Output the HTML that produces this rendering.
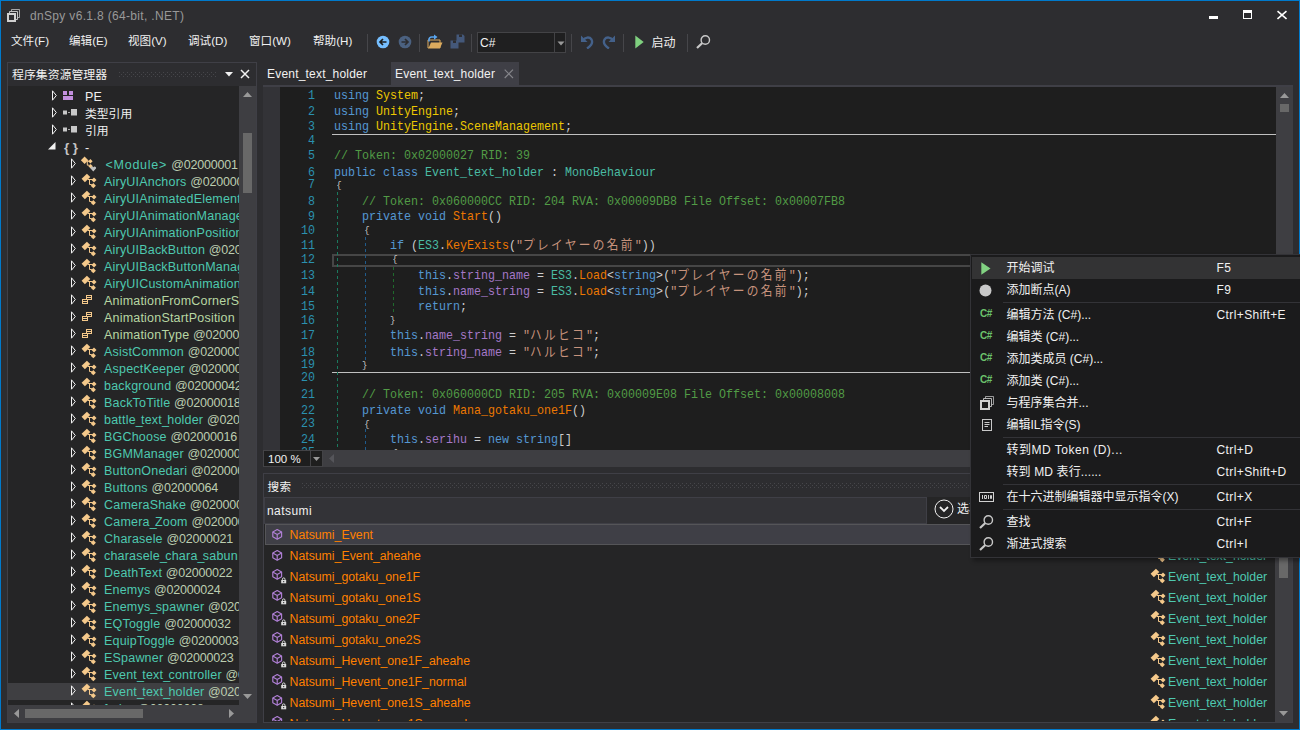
<!DOCTYPE html><html><head><meta charset="utf-8"><title>dnSpy</title><style>
*{box-sizing:border-box;margin:0;padding:0}
html,body{width:1300px;height:730px;overflow:hidden;background:#2d2d30}
body{position:relative;font-family:"Liberation Sans","Noto Sans CJK SC",sans-serif;font-size:12px;letter-spacing:0.2px;color:#f1f1f1}
.abs{position:absolute}
.t{position:absolute;white-space:pre;line-height:16px;height:16px}
#win{position:absolute;left:0;top:0;width:1300px;height:730px;border:1px solid #007acc;background:#2d2d30}
.menu{color:#f1f1f1}
.tree{position:absolute;left:8px;top:86px;width:231px;height:619px;background:#252526;overflow:hidden}
.row{position:absolute;left:0;width:231px;height:17px}
.row .tx{position:absolute;top:1px;line-height:17px;white-space:pre;font-size:12.5px}
.cls{color:#4ec9b0}.tok{color:#bccdb0;letter-spacing:-0.2px}.enm{color:#b8d7a3}
.code{position:absolute;left:334px;white-space:pre;letter-spacing:0;font-family:"Liberation Mono","Noto Sans CJK JP",monospace;font-size:13px;line-height:16px;height:16px;transform:scaleX(0.8974);transform-origin:0 50%;color:#dcdcdc;opacity:0.92}
.ln{position:absolute;left:243px;width:72px;text-align:right;white-space:pre;letter-spacing:0;font-family:"Liberation Mono","Noto Sans CJK JP",monospace;font-size:13px;line-height:16px;height:16px;transform:scaleX(0.8974);transform-origin:100% 50%;color:#2b91af}
.k{color:#5aa2e0}.ns{color:#ffd700}.ty{color:#4ec9b0}.c{color:#57a64a}.m{color:#ff8000}.f{color:#b180d7}.s{color:#d69d85}.n{color:#b5cea8}.p{color:#dcdcdc}
.cj{letter-spacing:2.6px}
.sr{position:absolute;left:265px;width:1011px;height:21px}
.sr .tx{position:absolute;left:24.5px;top:1px;line-height:20px;color:#ff8000;white-space:pre;font-size:12.3px;letter-spacing:0}
.sr .rt{position:absolute;left:903px;top:1px;line-height:20px;color:#4ec9b0;white-space:pre;font-size:12.3px;letter-spacing:0}
.mi{position:absolute;left:1px;width:340px;height:22px}
.mi .tx{position:absolute;left:34.5px;top:-0.5px;line-height:22px;white-space:pre;color:#f1f1f1;font-size:12px;letter-spacing:0}
.mi .sc{position:absolute;left:244.5px;top:-0.5px;line-height:22px;white-space:pre;color:#f1f1f1;letter-spacing:0.4px}
.sep{position:absolute;left:32px;width:310px;height:1px;background:#333337}
</style></head><body><div id="win">
<div class="abs" style="left:-1px;top:-1px;width:1300px;height:730px">
<!--TITLE-->
<div class="t" style="left:30px;top:8px;color:#999;letter-spacing:0.33px">dnSpy v6.1.8 (64-bit, .NET)</div>
<svg class="abs" style="left:7px;top:9px" width="13" height="13" viewBox="0 0 13 13" ><g fill="none" stroke="#d0d0d0"><path d="M4.5 2V0.5H12.5V8.5H11" stroke-width="1" opacity="0.75"/><path d="M2.5 4V2.5H10.5V10.5H9" stroke-width="1" opacity="0.9"/><rect x="1" y="5" width="7" height="7" stroke-width="2"/></g></svg>
<div class="abs" style="left:1209px;top:16px;width:9px;height:3px;background:#fff"></div>
<div class="abs" style="left:1243px;top:10px;width:9px;height:9px;border:1px solid #fff;border-top-width:3px"></div>
<svg class="abs" style="left:1277px;top:10px" width="10" height="10" viewBox="0 0 10 10" ><path d="M0.5 1.2L9.5 9M9.5 1.2L0.5 9" stroke="#fff" stroke-width="1.6" fill="none"/></svg>
<!--/TITLE-->
<!--MENU-->
<div class="t menu" style="left:11px;top:33px;letter-spacing:0;font-size:11.6px">文件(F)</div>
<div class="t menu" style="left:69px;top:33px;letter-spacing:0;font-size:11.6px">编辑(E)</div>
<div class="t menu" style="left:128px;top:33px;letter-spacing:0;font-size:11.6px">视图(V)</div>
<div class="t menu" style="left:188px;top:33px;letter-spacing:0;font-size:11.6px">调试(D)</div>
<div class="t menu" style="left:249px;top:33px;letter-spacing:0;font-size:11.6px">窗口(W)</div>
<div class="t menu" style="left:313px;top:33px;letter-spacing:0;font-size:11.6px">帮助(H)</div>
<!--/MENU-->
<!--TOOLBAR-->
<div class="abs" style="left:367px;top:34px;width:1px;height:18px;background:#46464a"></div>
<div class="abs" style="left:419px;top:34px;width:1px;height:18px;background:#46464a"></div>
<div class="abs" style="left:471px;top:34px;width:1px;height:18px;background:#46464a"></div>
<div class="abs" style="left:571px;top:34px;width:1px;height:18px;background:#46464a"></div>
<div class="abs" style="left:623px;top:34px;width:1px;height:18px;background:#46464a"></div>
<div class="abs" style="left:687px;top:34px;width:1px;height:18px;background:#46464a"></div>
<svg class="abs" style="left:376px;top:35px" width="14" height="14" viewBox="0 0 14 14" ><circle cx="7" cy="7" r="6.3" fill="#75beff"/><path d="M10.5 7H4.5M7 4L4 7L7 10" fill="none" stroke="#1e1e1e" stroke-width="1.7"/></svg>
<svg class="abs" style="left:398px;top:35px" width="14" height="14" viewBox="0 0 14 14" ><circle cx="7" cy="7" r="6.3" fill="#4b6180"/><path d="M3.5 7H9.5M7 4L10 7L7 10" fill="none" stroke="#2d2d30" stroke-width="1.7"/></svg>
<svg class="abs" style="left:427px;top:34px" width="16" height="16" viewBox="0 0 16 16" ><path d="M1 6H13V14H1Z" fill="none" stroke="#dcab5e" stroke-width="1"/><path d="M1.5 14L4 8.5H15.5L13 14Z" fill="#dcab5e"/><path d="M2 7.5V5.5A2.5 2.5 0 0 1 4.5 3H8.5" fill="none" stroke="#5aa6f0" stroke-width="1.6"/><path d="M7 0.5L10.5 3L7 5.8Z" fill="#5aa6f0"/></svg>
<svg class="abs" style="left:450px;top:34px" width="15" height="15" viewBox="0 0 15 15" ><path d="M6.5 0.5H13L14.5 2V8.5H6.5Z" fill="#44587a"/><rect x="9" y="0.5" width="3" height="2.5" fill="#2d2d30"/><path d="M0.5 6.5H7L8.5 8V14.5H0.5Z" fill="#44587a"/><rect x="3" y="6.5" width="3" height="2.5" fill="#2d2d30"/></svg>
<div class="abs" style="left:477px;top:32px;width:89px;height:21px;background:#1f1f20;border:1px solid #434346"></div>
<div class="abs" style="left:554px;top:33px;width:1px;height:19px;background:#434346"></div>
<svg class="abs" style="left:557px;top:41px" width="8" height="5" viewBox="0 0 8 5" ><path d="M0.5 0.5H7.5L4 4.5Z" fill="#999"/></svg>
<div class="t" style="left:480px;top:35px">C#</div>
<svg class="abs" style="left:580px;top:35px" width="14" height="14" viewBox="0 0 14 14" ><path d="M1 0.5V7H7.5Z" fill="#44618a"/><path d="M3 5.5C5 2 9.5 1.5 11.5 4.5C13 7.5 11 11 7 13.5" fill="none" stroke="#44618a" stroke-width="2.3"/></svg>
<svg class="abs" style="left:602px;top:35px" width="14" height="14" viewBox="0 0 14 14" ><path d="M13 0.5V7H6.5Z" fill="#44618a"/><path d="M11 5.5C9 2 4.5 1.5 2.5 4.5C1 7.5 3 11 7 13.5" fill="none" stroke="#44618a" stroke-width="2.3"/></svg>
<svg class="abs" style="left:635px;top:35px" width="9" height="14" viewBox="0 0 9 14" ><path d="M0.3 0.5L8.7 7L0.3 13.5Z" fill="#7fd07f"/></svg>
<div class="t" style="left:651.5px;top:35px;letter-spacing:0">启动</div>
<svg class="abs" style="left:696px;top:35px" width="15" height="14" viewBox="0 0 15 14" ><circle cx="9.3" cy="5" r="4.2" fill="none" stroke="#c8c8c8" stroke-width="1.4"/><path d="M6.3 8L1 13" stroke="#c8c8c8" stroke-width="2.2" fill="none"/></svg>
<!--/TOOLBAR-->
<!--LEFT-->
<div class="abs" style="left:7px;top:62px;width:250px;height:661px;border:1px solid #3f3f46;background:#2d2d30"></div>
<div class="t" style="left:12px;top:66.5px;letter-spacing:0;font-size:11.9px">程序集资源管理器</div>
<div class="tree">
<div class="row" style="top:2px"><div class="abs" style="left:1px;top:0;width:230px;height:17px">
<svg class="abs" style="left:42px;top:1.5px" width="7" height="11" viewBox="0 0 7 11" ><path d="M1.5 0.8L5.3 5.5L1.5 10.2Z" fill="none" stroke="#f1f1f1" stroke-width="1"/></svg>
<svg class="abs" style="left:54px;top:3px" width="10" height="9" viewBox="0 0 10 9" ><rect x="0" y="0" width="4" height="4" fill="#c28fde"/><rect x="6" y="0" width="4" height="4" fill="#c28fde"/><rect x="0" y="5" width="10" height="4" fill="#c28fde"/></svg>
<div class="tx" style="left:76px">PE</div>
</div></div>
<div class="row" style="top:19px"><div class="abs" style="left:1px;top:0;width:230px;height:17px">
<svg class="abs" style="left:42px;top:1.5px" width="7" height="11" viewBox="0 0 7 11" ><path d="M1.5 0.8L5.3 5.5L1.5 10.2Z" fill="none" stroke="#f1f1f1" stroke-width="1"/></svg>
<svg class="abs" style="left:54px;top:4px" width="14" height="7" viewBox="0 0 14 7" ><rect x="0" y="1.5" width="4" height="4" fill="#c8c8c8"/><rect x="5" y="3" width="2" height="1" fill="#a8a8a8"/><rect x="8" y="0" width="6" height="6.5" fill="#c8c8c8"/></svg>
<div class="tx" style="left:76px;font-size:11.8px;letter-spacing:0">类型引用</div>
</div></div>
<div class="row" style="top:36px"><div class="abs" style="left:1px;top:0;width:230px;height:17px">
<svg class="abs" style="left:42px;top:1.5px" width="7" height="11" viewBox="0 0 7 11" ><path d="M1.5 0.8L5.3 5.5L1.5 10.2Z" fill="none" stroke="#f1f1f1" stroke-width="1"/></svg>
<svg class="abs" style="left:54px;top:4px" width="14" height="7" viewBox="0 0 14 7" ><rect x="0" y="1.5" width="4" height="4" fill="#c8c8c8"/><rect x="5" y="3" width="2" height="1" fill="#a8a8a8"/><rect x="8" y="0" width="6" height="6.5" fill="#c8c8c8"/></svg>
<div class="tx" style="left:76px;font-size:11.8px;letter-spacing:0">引用</div>
</div></div>
<div class="row" style="top:53px"><div class="abs" style="left:1px;top:0;width:230px;height:17px">
<svg class="abs" style="left:39px;top:3px" width="8" height="8" viewBox="0 0 8 8" ><path d="M7.5 0V7.5H0Z" fill="#f1f1f1"/></svg>
<div class="tx" style="left:55px;font-size:13.5px;font-weight:bold;color:#c4c4c4;letter-spacing:3.5px;top:0px">{}</div>
<div class="tx" style="left:76px">-</div>
</div></div>
<div class="row" style="top:70px"><div class="abs" style="left:1px;top:0;width:230px;height:17px">
<svg class="abs" style="left:61px;top:1.5px" width="7" height="11" viewBox="0 0 7 11" ><path d="M1.5 0.8L5.3 5.5L1.5 10.2Z" fill="none" stroke="#f1f1f1" stroke-width="1"/></svg>
<svg class="abs" style="left:71px;top:0px" width="17" height="17" viewBox="0 0 17 17" ><path d="M4.6 0.5L8.3 4.2L4.6 7.9L0.9 4.2Z" fill="#f5c98b"/><path d="M10.4 3L12.6 5.2L10.4 7.4L8.2 5.2Z" fill="#f5c98b"/><path d="M10.6 8L12.8 10.2L10.6 12.4L8.4 10.2Z" fill="#f5c98b"/><path d="M7 5.2H9M7.3 5.2V9.2H9.5" fill="none" stroke="#f5c98b" stroke-width="1"/><path d="M13.3 15.6L10.6 12.6A1.5 1.5 0 0 1 13.3 11.3A1.5 1.5 0 0 1 16 12.6Z" fill="#c0c0c0"/></svg>
<div class="tx" style="left:95px;margin-left:1.5px;letter-spacing:0.75px"><span class="cls">&lt;Module&gt;</span> <span class="tok">@02000001</span></div>
</div></div>
<div class="row" style="top:87px"><div class="abs" style="left:1px;top:0;width:230px;height:17px">
<svg class="abs" style="left:61px;top:1.5px" width="7" height="11" viewBox="0 0 7 11" ><path d="M1.5 0.8L5.3 5.5L1.5 10.2Z" fill="none" stroke="#f1f1f1" stroke-width="1"/></svg>
<svg class="abs" style="left:72px;top:0px" width="16" height="16" viewBox="0 0 16 16" ><path d="M5.9 0.7L9.3 3.9L3.85 9.2L0.6 5.85Z" fill="#f5c98b"/><path d="M13 4.4L15.5 6.9L13 9.4L10.5 6.9Z" fill="#f5c98b"/><path d="M12.3 10.1L14.9 12.7L12.3 15.3L9.7 12.7Z" fill="#f5c98b"/><path d="M6.9 6.5H11.8M8.5 6.5V11.5H10.8" fill="none" stroke="#f5c98b" stroke-width="1"/></svg>
<div class="tx" style="left:95px"><span class="cls">AiryUIAnchors</span> <span class="tok">@02000002</span></div>
</div></div>
<div class="row" style="top:104px"><div class="abs" style="left:1px;top:0;width:230px;height:17px">
<svg class="abs" style="left:61px;top:1.5px" width="7" height="11" viewBox="0 0 7 11" ><path d="M1.5 0.8L5.3 5.5L1.5 10.2Z" fill="none" stroke="#f1f1f1" stroke-width="1"/></svg>
<svg class="abs" style="left:72px;top:0px" width="16" height="16" viewBox="0 0 16 16" ><path d="M5.9 0.7L9.3 3.9L3.85 9.2L0.6 5.85Z" fill="#f5c98b"/><path d="M13 4.4L15.5 6.9L13 9.4L10.5 6.9Z" fill="#f5c98b"/><path d="M12.3 10.1L14.9 12.7L12.3 15.3L9.7 12.7Z" fill="#f5c98b"/><path d="M6.9 6.5H11.8M8.5 6.5V11.5H10.8" fill="none" stroke="#f5c98b" stroke-width="1"/></svg>
<div class="tx" style="left:95px"><span class="cls">AiryUIAnimatedElement</span> <span class="tok">@02000003</span></div>
</div></div>
<div class="row" style="top:121px"><div class="abs" style="left:1px;top:0;width:230px;height:17px">
<svg class="abs" style="left:61px;top:1.5px" width="7" height="11" viewBox="0 0 7 11" ><path d="M1.5 0.8L5.3 5.5L1.5 10.2Z" fill="none" stroke="#f1f1f1" stroke-width="1"/></svg>
<svg class="abs" style="left:72px;top:0px" width="16" height="16" viewBox="0 0 16 16" ><path d="M5.9 0.7L9.3 3.9L3.85 9.2L0.6 5.85Z" fill="#f5c98b"/><path d="M13 4.4L15.5 6.9L13 9.4L10.5 6.9Z" fill="#f5c98b"/><path d="M12.3 10.1L14.9 12.7L12.3 15.3L9.7 12.7Z" fill="#f5c98b"/><path d="M6.9 6.5H11.8M8.5 6.5V11.5H10.8" fill="none" stroke="#f5c98b" stroke-width="1"/></svg>
<div class="tx" style="left:95px"><span class="cls">AiryUIAnimationManager</span> <span class="tok">@02000004</span></div>
</div></div>
<div class="row" style="top:138px"><div class="abs" style="left:1px;top:0;width:230px;height:17px">
<svg class="abs" style="left:61px;top:1.5px" width="7" height="11" viewBox="0 0 7 11" ><path d="M1.5 0.8L5.3 5.5L1.5 10.2Z" fill="none" stroke="#f1f1f1" stroke-width="1"/></svg>
<svg class="abs" style="left:72px;top:0px" width="16" height="16" viewBox="0 0 16 16" ><path d="M5.9 0.7L9.3 3.9L3.85 9.2L0.6 5.85Z" fill="#f5c98b"/><path d="M13 4.4L15.5 6.9L13 9.4L10.5 6.9Z" fill="#f5c98b"/><path d="M12.3 10.1L14.9 12.7L12.3 15.3L9.7 12.7Z" fill="#f5c98b"/><path d="M6.9 6.5H11.8M8.5 6.5V11.5H10.8" fill="none" stroke="#f5c98b" stroke-width="1"/></svg>
<div class="tx" style="left:95px"><span class="cls">AiryUIAnimationPosition</span> <span class="tok">@02000005</span></div>
</div></div>
<div class="row" style="top:155px"><div class="abs" style="left:1px;top:0;width:230px;height:17px">
<svg class="abs" style="left:61px;top:1.5px" width="7" height="11" viewBox="0 0 7 11" ><path d="M1.5 0.8L5.3 5.5L1.5 10.2Z" fill="none" stroke="#f1f1f1" stroke-width="1"/></svg>
<svg class="abs" style="left:72px;top:0px" width="16" height="16" viewBox="0 0 16 16" ><path d="M5.9 0.7L9.3 3.9L3.85 9.2L0.6 5.85Z" fill="#f5c98b"/><path d="M13 4.4L15.5 6.9L13 9.4L10.5 6.9Z" fill="#f5c98b"/><path d="M12.3 10.1L14.9 12.7L12.3 15.3L9.7 12.7Z" fill="#f5c98b"/><path d="M6.9 6.5H11.8M8.5 6.5V11.5H10.8" fill="none" stroke="#f5c98b" stroke-width="1"/></svg>
<div class="tx" style="left:95px"><span class="cls">AiryUIBackButton</span> <span class="tok">@02000006</span></div>
</div></div>
<div class="row" style="top:172px"><div class="abs" style="left:1px;top:0;width:230px;height:17px">
<svg class="abs" style="left:61px;top:1.5px" width="7" height="11" viewBox="0 0 7 11" ><path d="M1.5 0.8L5.3 5.5L1.5 10.2Z" fill="none" stroke="#f1f1f1" stroke-width="1"/></svg>
<svg class="abs" style="left:72px;top:0px" width="16" height="16" viewBox="0 0 16 16" ><path d="M5.9 0.7L9.3 3.9L3.85 9.2L0.6 5.85Z" fill="#f5c98b"/><path d="M13 4.4L15.5 6.9L13 9.4L10.5 6.9Z" fill="#f5c98b"/><path d="M12.3 10.1L14.9 12.7L12.3 15.3L9.7 12.7Z" fill="#f5c98b"/><path d="M6.9 6.5H11.8M8.5 6.5V11.5H10.8" fill="none" stroke="#f5c98b" stroke-width="1"/></svg>
<div class="tx" style="left:95px"><span class="cls">AiryUIBackButtonManager</span> <span class="tok">@02000007</span></div>
</div></div>
<div class="row" style="top:189px"><div class="abs" style="left:1px;top:0;width:230px;height:17px">
<svg class="abs" style="left:61px;top:1.5px" width="7" height="11" viewBox="0 0 7 11" ><path d="M1.5 0.8L5.3 5.5L1.5 10.2Z" fill="none" stroke="#f1f1f1" stroke-width="1"/></svg>
<svg class="abs" style="left:72px;top:0px" width="16" height="16" viewBox="0 0 16 16" ><path d="M5.9 0.7L9.3 3.9L3.85 9.2L0.6 5.85Z" fill="#f5c98b"/><path d="M13 4.4L15.5 6.9L13 9.4L10.5 6.9Z" fill="#f5c98b"/><path d="M12.3 10.1L14.9 12.7L12.3 15.3L9.7 12.7Z" fill="#f5c98b"/><path d="M6.9 6.5H11.8M8.5 6.5V11.5H10.8" fill="none" stroke="#f5c98b" stroke-width="1"/></svg>
<div class="tx" style="left:95px"><span class="cls">AiryUICustomAnimationElement</span> <span class="tok">@02000008</span></div>
</div></div>
<div class="row" style="top:206px"><div class="abs" style="left:1px;top:0;width:230px;height:17px">
<svg class="abs" style="left:61px;top:1.5px" width="7" height="11" viewBox="0 0 7 11" ><path d="M1.5 0.8L5.3 5.5L1.5 10.2Z" fill="none" stroke="#f1f1f1" stroke-width="1"/></svg>
<svg class="abs" style="left:72px;top:0px" width="16" height="16" viewBox="0 0 16 16" ><g fill="none" stroke="#f5c98b" stroke-width="1"><rect x="5.5" y="3.5" width="5" height="4"/><path d="M5.5 5.5H10.5"/><rect x="1.5" y="7.5" width="5" height="4" fill="#252526"/><path d="M1.5 9.5H6.5"/></g></svg>
<div class="tx" style="left:95px"><span class="enm">AnimationFromCornerStartPosition</span> <span class="tok">@02000009</span></div>
</div></div>
<div class="row" style="top:223px"><div class="abs" style="left:1px;top:0;width:230px;height:17px">
<svg class="abs" style="left:61px;top:1.5px" width="7" height="11" viewBox="0 0 7 11" ><path d="M1.5 0.8L5.3 5.5L1.5 10.2Z" fill="none" stroke="#f1f1f1" stroke-width="1"/></svg>
<svg class="abs" style="left:72px;top:0px" width="16" height="16" viewBox="0 0 16 16" ><g fill="none" stroke="#f5c98b" stroke-width="1"><rect x="5.5" y="3.5" width="5" height="4"/><path d="M5.5 5.5H10.5"/><rect x="1.5" y="7.5" width="5" height="4" fill="#252526"/><path d="M1.5 9.5H6.5"/></g></svg>
<div class="tx" style="left:95px"><span class="enm">AnimationStartPosition</span> <span class="tok">@0200000A</span></div>
</div></div>
<div class="row" style="top:240px"><div class="abs" style="left:1px;top:0;width:230px;height:17px">
<svg class="abs" style="left:61px;top:1.5px" width="7" height="11" viewBox="0 0 7 11" ><path d="M1.5 0.8L5.3 5.5L1.5 10.2Z" fill="none" stroke="#f1f1f1" stroke-width="1"/></svg>
<svg class="abs" style="left:72px;top:0px" width="16" height="16" viewBox="0 0 16 16" ><g fill="none" stroke="#f5c98b" stroke-width="1"><rect x="5.5" y="3.5" width="5" height="4"/><path d="M5.5 5.5H10.5"/><rect x="1.5" y="7.5" width="5" height="4" fill="#252526"/><path d="M1.5 9.5H6.5"/></g></svg>
<div class="tx" style="left:95px"><span class="enm">AnimationType</span> <span class="tok">@0200000B</span></div>
</div></div>
<div class="row" style="top:257px"><div class="abs" style="left:1px;top:0;width:230px;height:17px">
<svg class="abs" style="left:61px;top:1.5px" width="7" height="11" viewBox="0 0 7 11" ><path d="M1.5 0.8L5.3 5.5L1.5 10.2Z" fill="none" stroke="#f1f1f1" stroke-width="1"/></svg>
<svg class="abs" style="left:72px;top:0px" width="16" height="16" viewBox="0 0 16 16" ><path d="M5.9 0.7L9.3 3.9L3.85 9.2L0.6 5.85Z" fill="#f5c98b"/><path d="M13 4.4L15.5 6.9L13 9.4L10.5 6.9Z" fill="#f5c98b"/><path d="M12.3 10.1L14.9 12.7L12.3 15.3L9.7 12.7Z" fill="#f5c98b"/><path d="M6.9 6.5H11.8M8.5 6.5V11.5H10.8" fill="none" stroke="#f5c98b" stroke-width="1"/></svg>
<div class="tx" style="left:95px"><span class="cls">AsistCommon</span> <span class="tok">@0200000C</span></div>
</div></div>
<div class="row" style="top:274px"><div class="abs" style="left:1px;top:0;width:230px;height:17px">
<svg class="abs" style="left:61px;top:1.5px" width="7" height="11" viewBox="0 0 7 11" ><path d="M1.5 0.8L5.3 5.5L1.5 10.2Z" fill="none" stroke="#f1f1f1" stroke-width="1"/></svg>
<svg class="abs" style="left:72px;top:0px" width="16" height="16" viewBox="0 0 16 16" ><path d="M5.9 0.7L9.3 3.9L3.85 9.2L0.6 5.85Z" fill="#f5c98b"/><path d="M13 4.4L15.5 6.9L13 9.4L10.5 6.9Z" fill="#f5c98b"/><path d="M12.3 10.1L14.9 12.7L12.3 15.3L9.7 12.7Z" fill="#f5c98b"/><path d="M6.9 6.5H11.8M8.5 6.5V11.5H10.8" fill="none" stroke="#f5c98b" stroke-width="1"/></svg>
<div class="tx" style="left:95px"><span class="cls">AspectKeeper</span> <span class="tok">@0200000D</span></div>
</div></div>
<div class="row" style="top:291px"><div class="abs" style="left:1px;top:0;width:230px;height:17px">
<svg class="abs" style="left:61px;top:1.5px" width="7" height="11" viewBox="0 0 7 11" ><path d="M1.5 0.8L5.3 5.5L1.5 10.2Z" fill="none" stroke="#f1f1f1" stroke-width="1"/></svg>
<svg class="abs" style="left:72px;top:0px" width="16" height="16" viewBox="0 0 16 16" ><path d="M5.9 0.7L9.3 3.9L3.85 9.2L0.6 5.85Z" fill="#f5c98b"/><path d="M13 4.4L15.5 6.9L13 9.4L10.5 6.9Z" fill="#f5c98b"/><path d="M12.3 10.1L14.9 12.7L12.3 15.3L9.7 12.7Z" fill="#f5c98b"/><path d="M6.9 6.5H11.8M8.5 6.5V11.5H10.8" fill="none" stroke="#f5c98b" stroke-width="1"/></svg>
<div class="tx" style="left:95px"><span class="cls">background</span> <span class="tok">@02000042</span></div>
</div></div>
<div class="row" style="top:308px"><div class="abs" style="left:1px;top:0;width:230px;height:17px">
<svg class="abs" style="left:61px;top:1.5px" width="7" height="11" viewBox="0 0 7 11" ><path d="M1.5 0.8L5.3 5.5L1.5 10.2Z" fill="none" stroke="#f1f1f1" stroke-width="1"/></svg>
<svg class="abs" style="left:72px;top:0px" width="16" height="16" viewBox="0 0 16 16" ><path d="M5.9 0.7L9.3 3.9L3.85 9.2L0.6 5.85Z" fill="#f5c98b"/><path d="M13 4.4L15.5 6.9L13 9.4L10.5 6.9Z" fill="#f5c98b"/><path d="M12.3 10.1L14.9 12.7L12.3 15.3L9.7 12.7Z" fill="#f5c98b"/><path d="M6.9 6.5H11.8M8.5 6.5V11.5H10.8" fill="none" stroke="#f5c98b" stroke-width="1"/></svg>
<div class="tx" style="left:95px"><span class="cls">BackToTitle</span> <span class="tok">@02000018</span></div>
</div></div>
<div class="row" style="top:325px"><div class="abs" style="left:1px;top:0;width:230px;height:17px">
<svg class="abs" style="left:61px;top:1.5px" width="7" height="11" viewBox="0 0 7 11" ><path d="M1.5 0.8L5.3 5.5L1.5 10.2Z" fill="none" stroke="#f1f1f1" stroke-width="1"/></svg>
<svg class="abs" style="left:72px;top:0px" width="16" height="16" viewBox="0 0 16 16" ><path d="M5.9 0.7L9.3 3.9L3.85 9.2L0.6 5.85Z" fill="#f5c98b"/><path d="M13 4.4L15.5 6.9L13 9.4L10.5 6.9Z" fill="#f5c98b"/><path d="M12.3 10.1L14.9 12.7L12.3 15.3L9.7 12.7Z" fill="#f5c98b"/><path d="M6.9 6.5H11.8M8.5 6.5V11.5H10.8" fill="none" stroke="#f5c98b" stroke-width="1"/></svg>
<div class="tx" style="left:95px"><span class="cls">battle<span style="letter-spacing:-1.7px">_</span>text<span style="letter-spacing:-1.7px">_</span>holder</span> <span class="tok">@02000019</span></div>
</div></div>
<div class="row" style="top:342px"><div class="abs" style="left:1px;top:0;width:230px;height:17px">
<svg class="abs" style="left:61px;top:1.5px" width="7" height="11" viewBox="0 0 7 11" ><path d="M1.5 0.8L5.3 5.5L1.5 10.2Z" fill="none" stroke="#f1f1f1" stroke-width="1"/></svg>
<svg class="abs" style="left:72px;top:0px" width="16" height="16" viewBox="0 0 16 16" ><path d="M5.9 0.7L9.3 3.9L3.85 9.2L0.6 5.85Z" fill="#f5c98b"/><path d="M13 4.4L15.5 6.9L13 9.4L10.5 6.9Z" fill="#f5c98b"/><path d="M12.3 10.1L14.9 12.7L12.3 15.3L9.7 12.7Z" fill="#f5c98b"/><path d="M6.9 6.5H11.8M8.5 6.5V11.5H10.8" fill="none" stroke="#f5c98b" stroke-width="1"/></svg>
<div class="tx" style="left:95px"><span class="cls">BGChoose</span> <span class="tok">@02000016</span></div>
</div></div>
<div class="row" style="top:359px"><div class="abs" style="left:1px;top:0;width:230px;height:17px">
<svg class="abs" style="left:61px;top:1.5px" width="7" height="11" viewBox="0 0 7 11" ><path d="M1.5 0.8L5.3 5.5L1.5 10.2Z" fill="none" stroke="#f1f1f1" stroke-width="1"/></svg>
<svg class="abs" style="left:72px;top:0px" width="16" height="16" viewBox="0 0 16 16" ><path d="M5.9 0.7L9.3 3.9L3.85 9.2L0.6 5.85Z" fill="#f5c98b"/><path d="M13 4.4L15.5 6.9L13 9.4L10.5 6.9Z" fill="#f5c98b"/><path d="M12.3 10.1L14.9 12.7L12.3 15.3L9.7 12.7Z" fill="#f5c98b"/><path d="M6.9 6.5H11.8M8.5 6.5V11.5H10.8" fill="none" stroke="#f5c98b" stroke-width="1"/></svg>
<div class="tx" style="left:95px"><span class="cls">BGMManager</span> <span class="tok">@0200000E</span></div>
</div></div>
<div class="row" style="top:376px"><div class="abs" style="left:1px;top:0;width:230px;height:17px">
<svg class="abs" style="left:61px;top:1.5px" width="7" height="11" viewBox="0 0 7 11" ><path d="M1.5 0.8L5.3 5.5L1.5 10.2Z" fill="none" stroke="#f1f1f1" stroke-width="1"/></svg>
<svg class="abs" style="left:72px;top:0px" width="16" height="16" viewBox="0 0 16 16" ><path d="M5.9 0.7L9.3 3.9L3.85 9.2L0.6 5.85Z" fill="#f5c98b"/><path d="M13 4.4L15.5 6.9L13 9.4L10.5 6.9Z" fill="#f5c98b"/><path d="M12.3 10.1L14.9 12.7L12.3 15.3L9.7 12.7Z" fill="#f5c98b"/><path d="M6.9 6.5H11.8M8.5 6.5V11.5H10.8" fill="none" stroke="#f5c98b" stroke-width="1"/></svg>
<div class="tx" style="left:95px"><span class="cls">ButtonOnedari</span> <span class="tok">@0200000F</span></div>
</div></div>
<div class="row" style="top:393px"><div class="abs" style="left:1px;top:0;width:230px;height:17px">
<svg class="abs" style="left:61px;top:1.5px" width="7" height="11" viewBox="0 0 7 11" ><path d="M1.5 0.8L5.3 5.5L1.5 10.2Z" fill="none" stroke="#f1f1f1" stroke-width="1"/></svg>
<svg class="abs" style="left:72px;top:0px" width="16" height="16" viewBox="0 0 16 16" ><path d="M5.9 0.7L9.3 3.9L3.85 9.2L0.6 5.85Z" fill="#f5c98b"/><path d="M13 4.4L15.5 6.9L13 9.4L10.5 6.9Z" fill="#f5c98b"/><path d="M12.3 10.1L14.9 12.7L12.3 15.3L9.7 12.7Z" fill="#f5c98b"/><path d="M6.9 6.5H11.8M8.5 6.5V11.5H10.8" fill="none" stroke="#f5c98b" stroke-width="1"/></svg>
<div class="tx" style="left:95px"><span class="cls">Buttons</span> <span class="tok">@02000064</span></div>
</div></div>
<div class="row" style="top:410px"><div class="abs" style="left:1px;top:0;width:230px;height:17px">
<svg class="abs" style="left:61px;top:1.5px" width="7" height="11" viewBox="0 0 7 11" ><path d="M1.5 0.8L5.3 5.5L1.5 10.2Z" fill="none" stroke="#f1f1f1" stroke-width="1"/></svg>
<svg class="abs" style="left:72px;top:0px" width="16" height="16" viewBox="0 0 16 16" ><path d="M5.9 0.7L9.3 3.9L3.85 9.2L0.6 5.85Z" fill="#f5c98b"/><path d="M13 4.4L15.5 6.9L13 9.4L10.5 6.9Z" fill="#f5c98b"/><path d="M12.3 10.1L14.9 12.7L12.3 15.3L9.7 12.7Z" fill="#f5c98b"/><path d="M6.9 6.5H11.8M8.5 6.5V11.5H10.8" fill="none" stroke="#f5c98b" stroke-width="1"/></svg>
<div class="tx" style="left:95px"><span class="cls">CameraShake</span> <span class="tok">@02000010</span></div>
</div></div>
<div class="row" style="top:427px"><div class="abs" style="left:1px;top:0;width:230px;height:17px">
<svg class="abs" style="left:61px;top:1.5px" width="7" height="11" viewBox="0 0 7 11" ><path d="M1.5 0.8L5.3 5.5L1.5 10.2Z" fill="none" stroke="#f1f1f1" stroke-width="1"/></svg>
<svg class="abs" style="left:72px;top:0px" width="16" height="16" viewBox="0 0 16 16" ><path d="M5.9 0.7L9.3 3.9L3.85 9.2L0.6 5.85Z" fill="#f5c98b"/><path d="M13 4.4L15.5 6.9L13 9.4L10.5 6.9Z" fill="#f5c98b"/><path d="M12.3 10.1L14.9 12.7L12.3 15.3L9.7 12.7Z" fill="#f5c98b"/><path d="M6.9 6.5H11.8M8.5 6.5V11.5H10.8" fill="none" stroke="#f5c98b" stroke-width="1"/></svg>
<div class="tx" style="left:95px"><span class="cls">Camera<span style="letter-spacing:-1.7px">_</span>Zoom</span> <span class="tok">@02000011</span></div>
</div></div>
<div class="row" style="top:444px"><div class="abs" style="left:1px;top:0;width:230px;height:17px">
<svg class="abs" style="left:61px;top:1.5px" width="7" height="11" viewBox="0 0 7 11" ><path d="M1.5 0.8L5.3 5.5L1.5 10.2Z" fill="none" stroke="#f1f1f1" stroke-width="1"/></svg>
<svg class="abs" style="left:72px;top:0px" width="16" height="16" viewBox="0 0 16 16" ><path d="M5.9 0.7L9.3 3.9L3.85 9.2L0.6 5.85Z" fill="#f5c98b"/><path d="M13 4.4L15.5 6.9L13 9.4L10.5 6.9Z" fill="#f5c98b"/><path d="M12.3 10.1L14.9 12.7L12.3 15.3L9.7 12.7Z" fill="#f5c98b"/><path d="M6.9 6.5H11.8M8.5 6.5V11.5H10.8" fill="none" stroke="#f5c98b" stroke-width="1"/></svg>
<div class="tx" style="left:95px"><span class="cls">Charasele</span> <span class="tok">@02000021</span></div>
</div></div>
<div class="row" style="top:461px"><div class="abs" style="left:1px;top:0;width:230px;height:17px">
<svg class="abs" style="left:61px;top:1.5px" width="7" height="11" viewBox="0 0 7 11" ><path d="M1.5 0.8L5.3 5.5L1.5 10.2Z" fill="none" stroke="#f1f1f1" stroke-width="1"/></svg>
<svg class="abs" style="left:72px;top:0px" width="16" height="16" viewBox="0 0 16 16" ><path d="M5.9 0.7L9.3 3.9L3.85 9.2L0.6 5.85Z" fill="#f5c98b"/><path d="M13 4.4L15.5 6.9L13 9.4L10.5 6.9Z" fill="#f5c98b"/><path d="M12.3 10.1L14.9 12.7L12.3 15.3L9.7 12.7Z" fill="#f5c98b"/><path d="M6.9 6.5H11.8M8.5 6.5V11.5H10.8" fill="none" stroke="#f5c98b" stroke-width="1"/></svg>
<div class="tx" style="left:95px"><span class="cls">charasele<span style="letter-spacing:-1.7px">_</span>chara<span style="letter-spacing:-1.7px">_</span>sabun</span> <span class="tok">@02000020</span></div>
</div></div>
<div class="row" style="top:478px"><div class="abs" style="left:1px;top:0;width:230px;height:17px">
<svg class="abs" style="left:61px;top:1.5px" width="7" height="11" viewBox="0 0 7 11" ><path d="M1.5 0.8L5.3 5.5L1.5 10.2Z" fill="none" stroke="#f1f1f1" stroke-width="1"/></svg>
<svg class="abs" style="left:72px;top:0px" width="16" height="16" viewBox="0 0 16 16" ><path d="M5.9 0.7L9.3 3.9L3.85 9.2L0.6 5.85Z" fill="#f5c98b"/><path d="M13 4.4L15.5 6.9L13 9.4L10.5 6.9Z" fill="#f5c98b"/><path d="M12.3 10.1L14.9 12.7L12.3 15.3L9.7 12.7Z" fill="#f5c98b"/><path d="M6.9 6.5H11.8M8.5 6.5V11.5H10.8" fill="none" stroke="#f5c98b" stroke-width="1"/></svg>
<div class="tx" style="left:95px"><span class="cls">DeathText</span> <span class="tok">@02000022</span></div>
</div></div>
<div class="row" style="top:495px"><div class="abs" style="left:1px;top:0;width:230px;height:17px">
<svg class="abs" style="left:61px;top:1.5px" width="7" height="11" viewBox="0 0 7 11" ><path d="M1.5 0.8L5.3 5.5L1.5 10.2Z" fill="none" stroke="#f1f1f1" stroke-width="1"/></svg>
<svg class="abs" style="left:72px;top:0px" width="16" height="16" viewBox="0 0 16 16" ><path d="M5.9 0.7L9.3 3.9L3.85 9.2L0.6 5.85Z" fill="#f5c98b"/><path d="M13 4.4L15.5 6.9L13 9.4L10.5 6.9Z" fill="#f5c98b"/><path d="M12.3 10.1L14.9 12.7L12.3 15.3L9.7 12.7Z" fill="#f5c98b"/><path d="M6.9 6.5H11.8M8.5 6.5V11.5H10.8" fill="none" stroke="#f5c98b" stroke-width="1"/></svg>
<div class="tx" style="left:95px"><span class="cls">Enemys</span> <span class="tok">@02000024</span></div>
</div></div>
<div class="row" style="top:512px"><div class="abs" style="left:1px;top:0;width:230px;height:17px">
<svg class="abs" style="left:61px;top:1.5px" width="7" height="11" viewBox="0 0 7 11" ><path d="M1.5 0.8L5.3 5.5L1.5 10.2Z" fill="none" stroke="#f1f1f1" stroke-width="1"/></svg>
<svg class="abs" style="left:72px;top:0px" width="16" height="16" viewBox="0 0 16 16" ><path d="M5.9 0.7L9.3 3.9L3.85 9.2L0.6 5.85Z" fill="#f5c98b"/><path d="M13 4.4L15.5 6.9L13 9.4L10.5 6.9Z" fill="#f5c98b"/><path d="M12.3 10.1L14.9 12.7L12.3 15.3L9.7 12.7Z" fill="#f5c98b"/><path d="M6.9 6.5H11.8M8.5 6.5V11.5H10.8" fill="none" stroke="#f5c98b" stroke-width="1"/></svg>
<div class="tx" style="left:95px"><span class="cls">Enemys<span style="letter-spacing:-1.7px">_</span>spawner</span> <span class="tok">@02000025</span></div>
</div></div>
<div class="row" style="top:529px"><div class="abs" style="left:1px;top:0;width:230px;height:17px">
<svg class="abs" style="left:61px;top:1.5px" width="7" height="11" viewBox="0 0 7 11" ><path d="M1.5 0.8L5.3 5.5L1.5 10.2Z" fill="none" stroke="#f1f1f1" stroke-width="1"/></svg>
<svg class="abs" style="left:72px;top:0px" width="16" height="16" viewBox="0 0 16 16" ><path d="M5.9 0.7L9.3 3.9L3.85 9.2L0.6 5.85Z" fill="#f5c98b"/><path d="M13 4.4L15.5 6.9L13 9.4L10.5 6.9Z" fill="#f5c98b"/><path d="M12.3 10.1L14.9 12.7L12.3 15.3L9.7 12.7Z" fill="#f5c98b"/><path d="M6.9 6.5H11.8M8.5 6.5V11.5H10.8" fill="none" stroke="#f5c98b" stroke-width="1"/></svg>
<div class="tx" style="left:95px"><span class="cls">EQToggle</span> <span class="tok">@02000032</span></div>
</div></div>
<div class="row" style="top:546px"><div class="abs" style="left:1px;top:0;width:230px;height:17px">
<svg class="abs" style="left:61px;top:1.5px" width="7" height="11" viewBox="0 0 7 11" ><path d="M1.5 0.8L5.3 5.5L1.5 10.2Z" fill="none" stroke="#f1f1f1" stroke-width="1"/></svg>
<svg class="abs" style="left:72px;top:0px" width="16" height="16" viewBox="0 0 16 16" ><path d="M5.9 0.7L9.3 3.9L3.85 9.2L0.6 5.85Z" fill="#f5c98b"/><path d="M13 4.4L15.5 6.9L13 9.4L10.5 6.9Z" fill="#f5c98b"/><path d="M12.3 10.1L14.9 12.7L12.3 15.3L9.7 12.7Z" fill="#f5c98b"/><path d="M6.9 6.5H11.8M8.5 6.5V11.5H10.8" fill="none" stroke="#f5c98b" stroke-width="1"/></svg>
<div class="tx" style="left:95px"><span class="cls">EquipToggle</span> <span class="tok">@02000033</span></div>
</div></div>
<div class="row" style="top:563px"><div class="abs" style="left:1px;top:0;width:230px;height:17px">
<svg class="abs" style="left:61px;top:1.5px" width="7" height="11" viewBox="0 0 7 11" ><path d="M1.5 0.8L5.3 5.5L1.5 10.2Z" fill="none" stroke="#f1f1f1" stroke-width="1"/></svg>
<svg class="abs" style="left:72px;top:0px" width="16" height="16" viewBox="0 0 16 16" ><path d="M5.9 0.7L9.3 3.9L3.85 9.2L0.6 5.85Z" fill="#f5c98b"/><path d="M13 4.4L15.5 6.9L13 9.4L10.5 6.9Z" fill="#f5c98b"/><path d="M12.3 10.1L14.9 12.7L12.3 15.3L9.7 12.7Z" fill="#f5c98b"/><path d="M6.9 6.5H11.8M8.5 6.5V11.5H10.8" fill="none" stroke="#f5c98b" stroke-width="1"/></svg>
<div class="tx" style="left:95px"><span class="cls">ESpawner</span> <span class="tok">@02000023</span></div>
</div></div>
<div class="row" style="top:580px"><div class="abs" style="left:1px;top:0;width:230px;height:17px">
<svg class="abs" style="left:61px;top:1.5px" width="7" height="11" viewBox="0 0 7 11" ><path d="M1.5 0.8L5.3 5.5L1.5 10.2Z" fill="none" stroke="#f1f1f1" stroke-width="1"/></svg>
<svg class="abs" style="left:72px;top:0px" width="16" height="16" viewBox="0 0 16 16" ><path d="M5.9 0.7L9.3 3.9L3.85 9.2L0.6 5.85Z" fill="#f5c98b"/><path d="M13 4.4L15.5 6.9L13 9.4L10.5 6.9Z" fill="#f5c98b"/><path d="M12.3 10.1L14.9 12.7L12.3 15.3L9.7 12.7Z" fill="#f5c98b"/><path d="M6.9 6.5H11.8M8.5 6.5V11.5H10.8" fill="none" stroke="#f5c98b" stroke-width="1"/></svg>
<div class="tx" style="left:95px"><span class="cls">Event<span style="letter-spacing:-1.7px">_</span>text<span style="letter-spacing:-1.7px">_</span>controller</span> <span class="tok">@02000026</span></div>
</div></div>
<div class="row" style="top:597px;background:#3f3f42"><div class="abs" style="left:1px;top:0;width:230px;height:17px">
<svg class="abs" style="left:61px;top:1.5px" width="7" height="11" viewBox="0 0 7 11" ><path d="M1.5 0.8L5.3 5.5L1.5 10.2Z" fill="none" stroke="#f1f1f1" stroke-width="1"/></svg>
<svg class="abs" style="left:72px;top:0px" width="16" height="16" viewBox="0 0 16 16" ><path d="M5.9 0.7L9.3 3.9L3.85 9.2L0.6 5.85Z" fill="#f5c98b"/><path d="M13 4.4L15.5 6.9L13 9.4L10.5 6.9Z" fill="#f5c98b"/><path d="M12.3 10.1L14.9 12.7L12.3 15.3L9.7 12.7Z" fill="#f5c98b"/><path d="M6.9 6.5H11.8M8.5 6.5V11.5H10.8" fill="none" stroke="#f5c98b" stroke-width="1"/></svg>
<div class="tx" style="left:95px"><span class="cls">Event<span style="letter-spacing:-1.7px">_</span>text<span style="letter-spacing:-1.7px">_</span>holder</span> <span class="tok">@02000027</span></div>
</div></div>
<div class="row" style="top:614px"><div class="abs" style="left:1px;top:0;width:230px;height:17px">
<svg class="abs" style="left:61px;top:1.5px" width="7" height="11" viewBox="0 0 7 11" ><path d="M1.5 0.8L5.3 5.5L1.5 10.2Z" fill="none" stroke="#f1f1f1" stroke-width="1"/></svg>
<svg class="abs" style="left:72px;top:0px" width="16" height="16" viewBox="0 0 16 16" ><path d="M5.9 0.7L9.3 3.9L3.85 9.2L0.6 5.85Z" fill="#f5c98b"/><path d="M13 4.4L15.5 6.9L13 9.4L10.5 6.9Z" fill="#f5c98b"/><path d="M12.3 10.1L14.9 12.7L12.3 15.3L9.7 12.7Z" fill="#f5c98b"/><path d="M6.9 6.5H11.8M8.5 6.5V11.5H10.8" fill="none" stroke="#f5c98b" stroke-width="1"/></svg>
<div class="tx" style="left:95px"><span class="cls">fader</span> <span class="tok">@02000028</span></div>
</div></div>
</div>
<svg class="abs" style="left:119px;top:72px" width="98" height="5"><defs><pattern id="g119" width="4" height="4" patternUnits="userSpaceOnUse"><rect x="0" y="0" width="1" height="1" fill="#46464a"/><rect x="2" y="2" width="1" height="1" fill="#46464a"/></pattern></defs><rect width="98" height="5" fill="url(#g119)"/></svg>
<svg class="abs" style="left:225px;top:72px" width="8" height="5" viewBox="0 0 8 5" ><path d="M0 0H8L4 4.5Z" fill="#f1f1f1"/></svg>
<svg class="abs" style="left:240px;top:69px" width="10" height="10" viewBox="0 0 10 10" ><path d="M1 1L9 9M9 1L1 9" stroke="#f1f1f1" stroke-width="1.5" fill="none"/></svg>
<div class="abs" style="left:239px;top:86px;width:17px;height:619px;background:#3e3e42"></div>
<svg class="abs" style="left:243px;top:92px" width="9" height="5" viewBox="0 0 9 5" ><path d="M0 5L4.5 0L9 5Z" fill="#999"/></svg>
<svg class="abs" style="left:243px;top:694px" width="9" height="5" viewBox="0 0 9 5" ><path d="M0 0L4.5 5L9 0Z" fill="#999"/></svg>
<div class="abs" style="left:243px;top:133px;width:9px;height:60px;background:#686868"></div>
<div class="abs" style="left:8px;top:705px;width:248px;height:17px;background:#3e3e42"></div>
<svg class="abs" style="left:14px;top:709px" width="5" height="9" viewBox="0 0 5 9" ><path d="M5 0L0 4.5L5 9Z" fill="#999"/></svg>
<svg class="abs" style="left:229px;top:709px" width="5" height="9" viewBox="0 0 5 9" ><path d="M0 0L5 4.5L0 9Z" fill="#999"/></svg>
<div class="abs" style="left:25px;top:709px;width:118px;height:9px;background:#686868"></div>
<!--/LEFT-->
<!--TABS-->
<div class="abs" style="left:391px;top:62px;width:128px;height:24px;background:#3f3f46"></div>
<div class="abs" style="left:263px;top:85px;width:1030px;height:2px;background:#3f3f46"></div>
<div class="t" style="left:267px;top:66px">Event_text_holder</div>
<div class="t" style="left:395px;top:66px">Event_text_holder</div>
<svg class="abs" style="left:504px;top:68.5px" width="10" height="10" viewBox="0 0 10 10" ><path d="M0.7 0.7L9 9M9 0.7L0.7 9" stroke="#85858a" stroke-width="1.2" fill="none"/></svg>
<!--/TABS-->
<!--EDITOR-->
<div class="abs" style="left:263px;top:87px;width:1030px;height:363px;background:#1e1e1e;overflow:hidden"></div>
<div class="abs" style="left:263px;top:87px;width:17px;height:363px;background:#333337"></div>
<div class="abs" style="left:263px;top:86px;width:1013px;height:364px;overflow:hidden"><div class="abs" style="left:-263px;top:-86px;width:1300px;height:730px">
<div class="abs" style="left:332px;top:134px;width:944px;height:1px;background:#c0c0c0"></div>
<div class="abs" style="left:332px;top:372px;width:944px;height:1px;background:#c0c0c0"></div>
<div class="abs" style="left:332px;top:254px;width:946px;height:13px;border:2px solid #464646;border-right:none"></div>
<div class="abs" style="left:337px;top:192px;width:1px;height:258px;background:repeating-linear-gradient(to bottom,#1a7a5e 0,#1a7a5e 3px,transparent 3px,transparent 6px);background-position:0 0px;background-size:1px 6px"></div>
<div class="abs" style="left:365px;top:237px;width:1px;height:123px;background:repeating-linear-gradient(to bottom,#1f5b8c 0,#1f5b8c 3px,transparent 3px,transparent 6px);background-position:0 0px;background-size:1px 6px"></div>
<div class="abs" style="left:393px;top:267px;width:1px;height:48px;background:repeating-linear-gradient(to bottom,#1f6a2c 0,#1f6a2c 3px,transparent 3px,transparent 6px);background-position:0 0px;background-size:1px 6px"></div>
<div class="abs" style="left:365px;top:429px;width:1px;height:21px;background:repeating-linear-gradient(to bottom,#1f5b8c 0,#1f5b8c 3px,transparent 3px,transparent 6px);background-position:0 0px;background-size:1px 6px"></div>
<div class="ln" style="top:88.3px">1</div>
<div class="code" style="top:88.3px"><span class="k">using</span> <span class="ns">System</span>;</div>
<div class="ln" style="top:103.7px">2</div>
<div class="code" style="top:103.7px"><span class="k">using</span> <span class="ns">UnityEngine</span>;</div>
<div class="ln" style="top:119.4px">3</div>
<div class="code" style="top:119.4px"><span class="k">using</span> <span class="ns">UnityEngine</span>.<span class="ns">SceneManagement</span>;</div>
<div class="ln" style="top:132.7px">4</div>
<div class="ln" style="top:148.4px">5</div>
<div class="code" style="top:148.4px"><span class="c">// Token: 0x02000027 RID: 39</span></div>
<div class="ln" style="top:164.7px">6</div>
<div class="code" style="top:164.7px"><span class="k">public</span> <span class="k">class</span> <span class="ty">Event_text_holder</span> : <span class="ty">MonoBehaviour</span></div>
<div class="ln" style="top:177.4px">7</div>
<div class="code" style="top:178.0px;left:336.2px;transform:none;font-size:9px">{</div>
<div class="ln" style="top:193.8px">8</div>
<div class="code" style="top:193.8px">    <span class="c">// Token: 0x060000CC RID: 204 RVA: 0x00009DB8 File Offset: 0x00007FB8</span></div>
<div class="ln" style="top:209.4px">9</div>
<div class="code" style="top:209.4px">    <span class="k">private</span> <span class="k">void</span> <span class="m">Start</span>()</div>
<div class="ln" style="top:222.8px">10</div>
<div class="code" style="top:223.4px;left:364.2px;transform:none;font-size:9px">{</div>
<div class="ln" style="top:238.4px">11</div>
<div class="code" style="top:238.4px">        <span class="k">if</span> (<span class="ty">ES3</span>.<span class="m">KeyExists</span>(<span class="s">&quot;</span><span class="s cj">プレイヤーの名前</span><span class="s">&quot;</span>))</div>
<div class="ln" style="top:251.8px">12</div>
<div class="code" style="top:252.4px;left:392.2px;transform:none;font-size:9px">{</div>
<div class="ln" style="top:268.3px">13</div>
<div class="code" style="top:268.3px">            <span class="k">this</span>.<span class="f">string_name</span> = <span class="ty">ES3</span>.<span class="m">Load</span>&lt;<span class="k">string</span>&gt;(<span class="s">&quot;</span><span class="s cj">プレイヤーの名前</span><span class="s">&quot;</span>);</div>
<div class="ln" style="top:283.7px">14</div>
<div class="code" style="top:283.7px">            <span class="k">this</span>.<span class="f">name_string</span> = <span class="ty">ES3</span>.<span class="m">Load</span>&lt;<span class="k">string</span>&gt;(<span class="s">&quot;</span><span class="s cj">プレイヤーの名前</span><span class="s">&quot;</span>);</div>
<div class="ln" style="top:299.4px">15</div>
<div class="code" style="top:299.4px">            <span class="k">return</span>;</div>
<div class="ln" style="top:312.7px">16</div>
<div class="code" style="top:313.3px;left:390.1px;transform:none;font-size:9px">}</div>
<div class="ln" style="top:328.4px">17</div>
<div class="code" style="top:328.4px">        <span class="k">this</span>.<span class="f">name_string</span> = <span class="s">&quot;</span><span class="s cj">ハルヒコ</span><span class="s">&quot;</span>;</div>
<div class="ln" style="top:344.7px">18</div>
<div class="code" style="top:344.7px">        <span class="k">this</span>.<span class="f">string_name</span> = <span class="s">&quot;</span><span class="s cj">ハルヒコ</span><span class="s">&quot;</span>;</div>
<div class="ln" style="top:357.4px">19</div>
<div class="code" style="top:358.0px;left:362.1px;transform:none;font-size:9px">}</div>
<div class="ln" style="top:370.0px">20</div>
<div class="ln" style="top:386.9px">21</div>
<div class="code" style="top:386.9px">    <span class="c">// Token: 0x060000CD RID: 205 RVA: 0x00009E08 File Offset: 0x00008008</span></div>
<div class="ln" style="top:402.8px">22</div>
<div class="code" style="top:402.8px">    <span class="k">private</span> <span class="k">void</span> <span class="m">Mana_gotaku_one1F</span>()</div>
<div class="ln" style="top:415.9px">23</div>
<div class="code" style="top:416.5px;left:364.2px;transform:none;font-size:9px">{</div>
<div class="ln" style="top:431.8px">24</div>
<div class="code" style="top:431.8px">        <span class="k">this</span>.<span class="f">serihu</span> = <span class="k">new</span> <span class="k">string</span>[]</div>
<div class="ln" style="top:445.0px">25</div>
<div class="code" style="top:445.6px;left:392.2px;transform:none;font-size:9px">{</div>
</div></div>
<div class="abs" style="left:1276px;top:87px;width:17px;height:363px;background:#3e3e42"></div>
<svg class="abs" style="left:1280px;top:93px" width="9" height="5" viewBox="0 0 9 5" ><path d="M0 5L4.5 0L9 5Z" fill="#999"/></svg>
<div class="abs" style="left:1280px;top:104px;width:9px;height:8px;background:#686868"></div>
<!--/EDITOR-->
<!--ZOOMBAR-->
<div class="abs" style="left:263px;top:450px;width:1030px;height:17px;background:#3e3e42"></div>
<div class="abs" style="left:263px;top:450px;width:60px;height:17px;background:#1e1e1e;border:1px solid #434346"></div>
<div class="abs" style="left:310px;top:451px;width:1px;height:15px;background:#434346"></div>
<div class="t" style="left:268px;top:452px;line-height:15px;height:15px;letter-spacing:0;font-size:11.5px">100 %</div>
<svg class="abs" style="left:313px;top:457px" width="7" height="4" viewBox="0 0 7 4" ><path d="M0 0H7L3.5 4Z" fill="#999"/></svg>
<svg class="abs" style="left:329px;top:454px" width="5" height="9" viewBox="0 0 5 9" ><path d="M5 0L0 4.5L5 9Z" fill="#55555a"/></svg>
<!--/ZOOMBAR-->
<!--SEARCH-->
<div class="abs" style="left:263px;top:473px;width:1030px;height:250px;border:1px solid #3f3f46;background:#252526"></div>
<div class="abs" style="left:264px;top:474px;width:1028px;height:23px;background:#2d2d30"></div>
<div class="t" style="left:267.5px;top:478.5px;letter-spacing:0.3px;font-size:11.6px">搜索</div>
<div class="abs" style="left:264px;top:497px;width:663px;height:27px;background:#333337;border:1px solid #3f3f46"></div>
<div class="t" style="left:267px;top:503px;letter-spacing:0.45px">natsumi</div>
<div class="t" style="left:957px;top:501px">选项</div>
<div class="abs" style="left:264px;top:524px;width:1012px;height:197px;overflow:hidden"><div class="abs" style="left:-264px;top:-524px;width:1300px;height:730px">
<div class="sr" style="top:524px;background:#3f3f46;border:1px solid #555558;">
<svg class="abs" style="left:6px;top:4px" width="15" height="15" viewBox="0 0 15 15" ><g fill="none" stroke="#b180d7" stroke-width="1.15" stroke-linejoin="round"><path d="M5.2 0.6L9.6 3V7.8L5.2 10.2L0.8 7.8V3Z"/><path d="M0.8 3L5.2 5.4L9.6 3M5.2 5.4V10.2"/></g></svg>
<svg class="abs" style="left:884px;top:1px" width="16" height="16" viewBox="0 0 16 16" ><path d="M5.9 0.7L9.3 3.9L3.85 9.2L0.6 5.85Z" fill="#f5c98b"/><path d="M13 4.4L15.5 6.9L13 9.4L10.5 6.9Z" fill="#f5c98b"/><path d="M12.3 10.1L14.9 12.7L12.3 15.3L9.7 12.7Z" fill="#f5c98b"/><path d="M6.9 6.5H11.8M8.5 6.5V11.5H10.8" fill="none" stroke="#f5c98b" stroke-width="1"/></svg>
<div class="tx" style="margin:-1px 0 0 -1px">Natsumi_Event</div>
<div class="rt" style="margin:-1px 0 0 -1px">Event_text_holder</div>
</div>
<div class="sr" style="top:545px;">
<svg class="abs" style="left:7px;top:5px" width="15" height="15" viewBox="0 0 15 15" ><g fill="none" stroke="#b180d7" stroke-width="1.15" stroke-linejoin="round"><path d="M5.2 0.6L9.6 3V7.8L5.2 10.2L0.8 7.8V3Z"/><path d="M0.8 3L5.2 5.4L9.6 3M5.2 5.4V10.2"/></g></svg>
<svg class="abs" style="left:885px;top:2px" width="16" height="16" viewBox="0 0 16 16" ><path d="M5.9 0.7L9.3 3.9L3.85 9.2L0.6 5.85Z" fill="#f5c98b"/><path d="M13 4.4L15.5 6.9L13 9.4L10.5 6.9Z" fill="#f5c98b"/><path d="M12.3 10.1L14.9 12.7L12.3 15.3L9.7 12.7Z" fill="#f5c98b"/><path d="M6.9 6.5H11.8M8.5 6.5V11.5H10.8" fill="none" stroke="#f5c98b" stroke-width="1"/></svg>
<div class="tx" style="margin:0px 0 0 0px">Natsumi_Event_aheahe</div>
<div class="rt" style="margin:0px 0 0 0px">Event_text_holder</div>
</div>
<div class="sr" style="top:566px;">
<svg class="abs" style="left:7px;top:3px" width="15" height="15" viewBox="0 0 15 15" ><g fill="none" stroke="#b180d7" stroke-width="1.15" stroke-linejoin="round"><path d="M5.2 0.6L9.6 3V7.8L5.2 10.2L0.8 7.8V3Z"/><path d="M0.8 3L5.2 5.4L9.6 3M5.2 5.4V10.2"/></g><rect x="9.2" y="11" width="5" height="3.3" fill="#dcdcdc"/><path d="M10.4 11V10.2A1.3 1.3 0 0 1 13 10.2V11" fill="none" stroke="#dcdcdc" stroke-width="1"/><rect x="11.2" y="12" width="1" height="1.2" fill="#252526"/></svg>
<svg class="abs" style="left:885px;top:2px" width="16" height="16" viewBox="0 0 16 16" ><path d="M5.9 0.7L9.3 3.9L3.85 9.2L0.6 5.85Z" fill="#f5c98b"/><path d="M13 4.4L15.5 6.9L13 9.4L10.5 6.9Z" fill="#f5c98b"/><path d="M12.3 10.1L14.9 12.7L12.3 15.3L9.7 12.7Z" fill="#f5c98b"/><path d="M6.9 6.5H11.8M8.5 6.5V11.5H10.8" fill="none" stroke="#f5c98b" stroke-width="1"/></svg>
<div class="tx" style="margin:0px 0 0 0px">Natsumi_gotaku_one1F</div>
<div class="rt" style="margin:0px 0 0 0px">Event_text_holder</div>
</div>
<div class="sr" style="top:587px;">
<svg class="abs" style="left:7px;top:3px" width="15" height="15" viewBox="0 0 15 15" ><g fill="none" stroke="#b180d7" stroke-width="1.15" stroke-linejoin="round"><path d="M5.2 0.6L9.6 3V7.8L5.2 10.2L0.8 7.8V3Z"/><path d="M0.8 3L5.2 5.4L9.6 3M5.2 5.4V10.2"/></g><rect x="9.2" y="11" width="5" height="3.3" fill="#dcdcdc"/><path d="M10.4 11V10.2A1.3 1.3 0 0 1 13 10.2V11" fill="none" stroke="#dcdcdc" stroke-width="1"/><rect x="11.2" y="12" width="1" height="1.2" fill="#252526"/></svg>
<svg class="abs" style="left:885px;top:2px" width="16" height="16" viewBox="0 0 16 16" ><path d="M5.9 0.7L9.3 3.9L3.85 9.2L0.6 5.85Z" fill="#f5c98b"/><path d="M13 4.4L15.5 6.9L13 9.4L10.5 6.9Z" fill="#f5c98b"/><path d="M12.3 10.1L14.9 12.7L12.3 15.3L9.7 12.7Z" fill="#f5c98b"/><path d="M6.9 6.5H11.8M8.5 6.5V11.5H10.8" fill="none" stroke="#f5c98b" stroke-width="1"/></svg>
<div class="tx" style="margin:0px 0 0 0px">Natsumi_gotaku_one1S</div>
<div class="rt" style="margin:0px 0 0 0px">Event_text_holder</div>
</div>
<div class="sr" style="top:608px;">
<svg class="abs" style="left:7px;top:3px" width="15" height="15" viewBox="0 0 15 15" ><g fill="none" stroke="#b180d7" stroke-width="1.15" stroke-linejoin="round"><path d="M5.2 0.6L9.6 3V7.8L5.2 10.2L0.8 7.8V3Z"/><path d="M0.8 3L5.2 5.4L9.6 3M5.2 5.4V10.2"/></g><rect x="9.2" y="11" width="5" height="3.3" fill="#dcdcdc"/><path d="M10.4 11V10.2A1.3 1.3 0 0 1 13 10.2V11" fill="none" stroke="#dcdcdc" stroke-width="1"/><rect x="11.2" y="12" width="1" height="1.2" fill="#252526"/></svg>
<svg class="abs" style="left:885px;top:2px" width="16" height="16" viewBox="0 0 16 16" ><path d="M5.9 0.7L9.3 3.9L3.85 9.2L0.6 5.85Z" fill="#f5c98b"/><path d="M13 4.4L15.5 6.9L13 9.4L10.5 6.9Z" fill="#f5c98b"/><path d="M12.3 10.1L14.9 12.7L12.3 15.3L9.7 12.7Z" fill="#f5c98b"/><path d="M6.9 6.5H11.8M8.5 6.5V11.5H10.8" fill="none" stroke="#f5c98b" stroke-width="1"/></svg>
<div class="tx" style="margin:0px 0 0 0px">Natsumi_gotaku_one2F</div>
<div class="rt" style="margin:0px 0 0 0px">Event_text_holder</div>
</div>
<div class="sr" style="top:629px;">
<svg class="abs" style="left:7px;top:3px" width="15" height="15" viewBox="0 0 15 15" ><g fill="none" stroke="#b180d7" stroke-width="1.15" stroke-linejoin="round"><path d="M5.2 0.6L9.6 3V7.8L5.2 10.2L0.8 7.8V3Z"/><path d="M0.8 3L5.2 5.4L9.6 3M5.2 5.4V10.2"/></g><rect x="9.2" y="11" width="5" height="3.3" fill="#dcdcdc"/><path d="M10.4 11V10.2A1.3 1.3 0 0 1 13 10.2V11" fill="none" stroke="#dcdcdc" stroke-width="1"/><rect x="11.2" y="12" width="1" height="1.2" fill="#252526"/></svg>
<svg class="abs" style="left:885px;top:2px" width="16" height="16" viewBox="0 0 16 16" ><path d="M5.9 0.7L9.3 3.9L3.85 9.2L0.6 5.85Z" fill="#f5c98b"/><path d="M13 4.4L15.5 6.9L13 9.4L10.5 6.9Z" fill="#f5c98b"/><path d="M12.3 10.1L14.9 12.7L12.3 15.3L9.7 12.7Z" fill="#f5c98b"/><path d="M6.9 6.5H11.8M8.5 6.5V11.5H10.8" fill="none" stroke="#f5c98b" stroke-width="1"/></svg>
<div class="tx" style="margin:0px 0 0 0px">Natsumi_gotaku_one2S</div>
<div class="rt" style="margin:0px 0 0 0px">Event_text_holder</div>
</div>
<div class="sr" style="top:650px;">
<svg class="abs" style="left:7px;top:3px" width="15" height="15" viewBox="0 0 15 15" ><g fill="none" stroke="#b180d7" stroke-width="1.15" stroke-linejoin="round"><path d="M5.2 0.6L9.6 3V7.8L5.2 10.2L0.8 7.8V3Z"/><path d="M0.8 3L5.2 5.4L9.6 3M5.2 5.4V10.2"/></g><rect x="9.2" y="11" width="5" height="3.3" fill="#dcdcdc"/><path d="M10.4 11V10.2A1.3 1.3 0 0 1 13 10.2V11" fill="none" stroke="#dcdcdc" stroke-width="1"/><rect x="11.2" y="12" width="1" height="1.2" fill="#252526"/></svg>
<svg class="abs" style="left:885px;top:2px" width="16" height="16" viewBox="0 0 16 16" ><path d="M5.9 0.7L9.3 3.9L3.85 9.2L0.6 5.85Z" fill="#f5c98b"/><path d="M13 4.4L15.5 6.9L13 9.4L10.5 6.9Z" fill="#f5c98b"/><path d="M12.3 10.1L14.9 12.7L12.3 15.3L9.7 12.7Z" fill="#f5c98b"/><path d="M6.9 6.5H11.8M8.5 6.5V11.5H10.8" fill="none" stroke="#f5c98b" stroke-width="1"/></svg>
<div class="tx" style="margin:0px 0 0 0px">Natsumi_Hevent_one1F_aheahe</div>
<div class="rt" style="margin:0px 0 0 0px">Event_text_holder</div>
</div>
<div class="sr" style="top:671px;">
<svg class="abs" style="left:7px;top:3px" width="15" height="15" viewBox="0 0 15 15" ><g fill="none" stroke="#b180d7" stroke-width="1.15" stroke-linejoin="round"><path d="M5.2 0.6L9.6 3V7.8L5.2 10.2L0.8 7.8V3Z"/><path d="M0.8 3L5.2 5.4L9.6 3M5.2 5.4V10.2"/></g><rect x="9.2" y="11" width="5" height="3.3" fill="#dcdcdc"/><path d="M10.4 11V10.2A1.3 1.3 0 0 1 13 10.2V11" fill="none" stroke="#dcdcdc" stroke-width="1"/><rect x="11.2" y="12" width="1" height="1.2" fill="#252526"/></svg>
<svg class="abs" style="left:885px;top:2px" width="16" height="16" viewBox="0 0 16 16" ><path d="M5.9 0.7L9.3 3.9L3.85 9.2L0.6 5.85Z" fill="#f5c98b"/><path d="M13 4.4L15.5 6.9L13 9.4L10.5 6.9Z" fill="#f5c98b"/><path d="M12.3 10.1L14.9 12.7L12.3 15.3L9.7 12.7Z" fill="#f5c98b"/><path d="M6.9 6.5H11.8M8.5 6.5V11.5H10.8" fill="none" stroke="#f5c98b" stroke-width="1"/></svg>
<div class="tx" style="margin:0px 0 0 0px">Natsumi_Hevent_one1F_normal</div>
<div class="rt" style="margin:0px 0 0 0px">Event_text_holder</div>
</div>
<div class="sr" style="top:692px;">
<svg class="abs" style="left:7px;top:3px" width="15" height="15" viewBox="0 0 15 15" ><g fill="none" stroke="#b180d7" stroke-width="1.15" stroke-linejoin="round"><path d="M5.2 0.6L9.6 3V7.8L5.2 10.2L0.8 7.8V3Z"/><path d="M0.8 3L5.2 5.4L9.6 3M5.2 5.4V10.2"/></g><rect x="9.2" y="11" width="5" height="3.3" fill="#dcdcdc"/><path d="M10.4 11V10.2A1.3 1.3 0 0 1 13 10.2V11" fill="none" stroke="#dcdcdc" stroke-width="1"/><rect x="11.2" y="12" width="1" height="1.2" fill="#252526"/></svg>
<svg class="abs" style="left:885px;top:2px" width="16" height="16" viewBox="0 0 16 16" ><path d="M5.9 0.7L9.3 3.9L3.85 9.2L0.6 5.85Z" fill="#f5c98b"/><path d="M13 4.4L15.5 6.9L13 9.4L10.5 6.9Z" fill="#f5c98b"/><path d="M12.3 10.1L14.9 12.7L12.3 15.3L9.7 12.7Z" fill="#f5c98b"/><path d="M6.9 6.5H11.8M8.5 6.5V11.5H10.8" fill="none" stroke="#f5c98b" stroke-width="1"/></svg>
<div class="tx" style="margin:0px 0 0 0px">Natsumi_Hevent_one1S_aheahe</div>
<div class="rt" style="margin:0px 0 0 0px">Event_text_holder</div>
</div>
<div class="sr" style="top:713px;">
<svg class="abs" style="left:7px;top:3px" width="15" height="15" viewBox="0 0 15 15" ><g fill="none" stroke="#b180d7" stroke-width="1.15" stroke-linejoin="round"><path d="M5.2 0.6L9.6 3V7.8L5.2 10.2L0.8 7.8V3Z"/><path d="M0.8 3L5.2 5.4L9.6 3M5.2 5.4V10.2"/></g><rect x="9.2" y="11" width="5" height="3.3" fill="#dcdcdc"/><path d="M10.4 11V10.2A1.3 1.3 0 0 1 13 10.2V11" fill="none" stroke="#dcdcdc" stroke-width="1"/><rect x="11.2" y="12" width="1" height="1.2" fill="#252526"/></svg>
<svg class="abs" style="left:885px;top:2px" width="16" height="16" viewBox="0 0 16 16" ><path d="M5.9 0.7L9.3 3.9L3.85 9.2L0.6 5.85Z" fill="#f5c98b"/><path d="M13 4.4L15.5 6.9L13 9.4L10.5 6.9Z" fill="#f5c98b"/><path d="M12.3 10.1L14.9 12.7L12.3 15.3L9.7 12.7Z" fill="#f5c98b"/><path d="M6.9 6.5H11.8M8.5 6.5V11.5H10.8" fill="none" stroke="#f5c98b" stroke-width="1"/></svg>
<div class="tx" style="margin:0px 0 0 0px">Natsumi_Hevent_one1S_normal</div>
<div class="rt" style="margin:0px 0 0 0px">Event_text_holder</div>
</div>
</div></div>
<div class="abs" style="left:1275px;top:524px;width:17px;height:198px;background:#3e3e42"></div>
<svg class="abs" style="left:302px;top:483px" width="988" height="5"><defs><pattern id="g302" width="4" height="4" patternUnits="userSpaceOnUse"><rect x="0" y="0" width="1" height="1" fill="#46464a"/><rect x="2" y="2" width="1" height="1" fill="#46464a"/></pattern></defs><rect width="988" height="5" fill="url(#g302)"/></svg>
<svg class="abs" style="left:934px;top:499px" width="20" height="20" viewBox="0 0 20 20" ><circle cx="10" cy="10" r="9" fill="none" stroke="#f1f1f1" stroke-width="1"/><path d="M6 8L10 12L14 8" fill="none" stroke="#f1f1f1" stroke-width="1.8"/></svg>
<div class="abs" style="left:1279px;top:540px;width:9px;height:38px;background:#686868"></div>
<svg class="abs" style="left:1279px;top:711px" width="9" height="5" viewBox="0 0 9 5" ><path d="M0 0L4.5 5L9 0Z" fill="#999"/></svg>
<!--/SEARCH-->
<!--CTX-->
<div class="abs" id="ctx" style="left:970px;top:254px;width:340px;height:304px;background:#1b1b1c;border:1px solid #333337;box-shadow:3px 3px 4px rgba(0,0,0,0.35)">
<div class="mi" style="top:2px;background:#333334;">
<svg class="abs" style="left:9px;top:4.5px" width="10" height="13" viewBox="0 0 10 13" ><path d="M0.3 0.3L9.5 6.5L0.3 12.7Z" fill="#82d282"/></svg>
<div class="tx">开始调试</div>
<div class="sc">F5</div>
</div>
<div class="mi" style="top:24px;">
<svg class="abs" style="left:7px;top:4.5px" width="13" height="13" viewBox="0 0 13 13" ><circle cx="6.5" cy="6.5" r="6" fill="#c8c8c8"/></svg>
<div class="tx">添加断点(A)</div>
<div class="sc">F9</div>
</div>
<div class="mi" style="top:49px;">
<div class="abs" style="left:8px;top:-1px;line-height:22px;font-size:10px;font-weight:bold;color:#6cc26c;letter-spacing:-0.5px">C#</div>
<div class="tx">编辑方法 (C#)...</div>
<div class="sc">Ctrl+Shift+E</div>
</div>
<div class="mi" style="top:71px;">
<div class="abs" style="left:8px;top:-1px;line-height:22px;font-size:10px;font-weight:bold;color:#6cc26c;letter-spacing:-0.5px">C#</div>
<div class="tx">编辑类 (C#)...</div>
</div>
<div class="mi" style="top:93px;">
<div class="abs" style="left:8px;top:-1px;line-height:22px;font-size:10px;font-weight:bold;color:#6cc26c;letter-spacing:-0.5px">C#</div>
<div class="tx">添加类成员 (C#)...</div>
</div>
<div class="mi" style="top:115px;">
<div class="abs" style="left:8px;top:-1px;line-height:22px;font-size:10px;font-weight:bold;color:#6cc26c;letter-spacing:-0.5px">C#</div>
<div class="tx">添加类 (C#)...</div>
</div>
<div class="mi" style="top:137px;">
<svg class="abs" style="left:8px;top:4px" width="14" height="14" viewBox="0 0 14 14" ><g fill="none" stroke="#d0d0d0"><path d="M5.5 2.5V0.5H13.5V8.5H11.5" stroke-width="1" opacity="0.7"/><path d="M3.5 4.5V2.5H11.5V10.5H9.5" stroke-width="1" opacity="0.85"/><rect x="1" y="5" width="8" height="8" stroke-width="2"/></g></svg>
<div class="tx">与程序集合并...</div>
</div>
<div class="mi" style="top:159px;">
<svg class="abs" style="left:10px;top:5px" width="10" height="12" viewBox="0 0 10 12" ><rect x="0.5" y="0.5" width="9" height="11" fill="none" stroke="#c8c8c8"/><path d="M2.5 3.5H7.5M2.5 5.5H7.5M2.5 7.5H6" stroke="#c8c8c8" fill="none"/></svg>
<div class="tx">编辑IL指令(S)</div>
</div>
<div class="mi" style="top:184px;">
<div class="tx" style="letter-spacing:0.5px">转到MD Token (D)...</div>
<div class="sc">Ctrl+D</div>
</div>
<div class="mi" style="top:206px;">
<div class="tx" style="letter-spacing:0.12px">转到 MD 表行......</div>
<div class="sc">Ctrl+Shift+D</div>
</div>
<div class="mi" style="top:231px;">
<svg class="abs" style="left:7px;top:5.5px" width="15" height="10" viewBox="0 0 15 10" ><rect x="0.5" y="0.5" width="14" height="9" fill="none" stroke="#d0d0d0"/><path d="M3.5 3V7M5.5 3.5H7.5V6.5H5.5ZM9.5 3V7M11.5 3.5H12.5V6.5H11.5Z" stroke="#d0d0d0" fill="none" stroke-width="1"/></svg>
<div class="tx">在十六进制编辑器中显示指令(X)</div>
<div class="sc">Ctrl+X</div>
</div>
<div class="mi" style="top:256px;">
<svg class="abs" style="left:7.3px;top:3.5px" width="15" height="14" viewBox="0 0 15 14" ><circle cx="9.3" cy="5" r="4.2" fill="none" stroke="#c8c8c8" stroke-width="1.4"/><path d="M6.3 8L1 13" stroke="#c8c8c8" stroke-width="2.2" fill="none"/></svg>
<div class="tx">查找</div>
<div class="sc">Ctrl+F</div>
</div>
<div class="mi" style="top:278px;">
<svg class="abs" style="left:7.3px;top:3.5px" width="15" height="14" viewBox="0 0 15 14" ><circle cx="9.3" cy="5" r="4.2" fill="none" stroke="#c8c8c8" stroke-width="1.4"/><path d="M6.3 8L1 13" stroke="#c8c8c8" stroke-width="2.2" fill="none"/></svg>
<div class="tx">渐进式搜索</div>
<div class="sc">Ctrl+I</div>
</div>
<div class="sep" style="top:47px"></div>
<div class="sep" style="top:182px"></div>
<div class="sep" style="top:229px"></div>
<div class="sep" style="top:254px"></div>
</div>
<!--/CTX-->
</div></div></body></html>
